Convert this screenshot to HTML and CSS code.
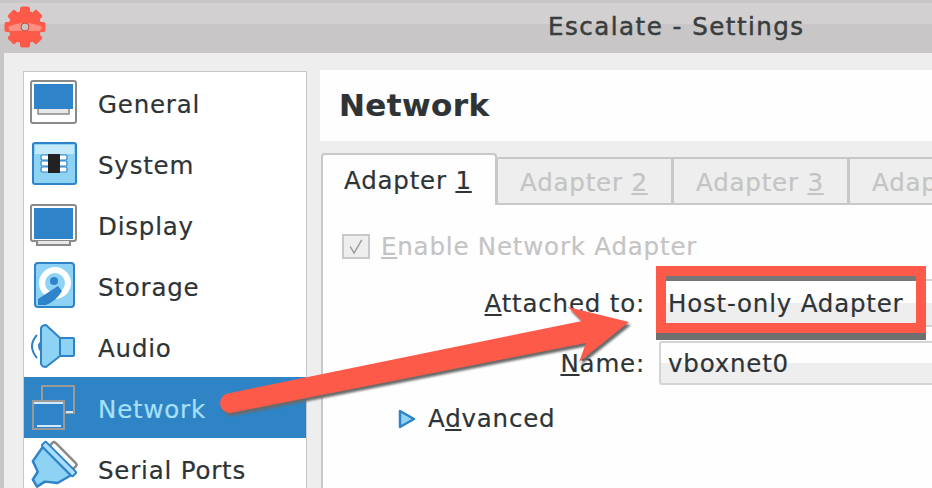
FILE: index.html
```html
<!DOCTYPE html>
<html lang="en">
<head>
    <meta charset="UTF-8">
    <title>Escalate - Settings</title>
    <link rel="stylesheet" href="styles.css">
</head>
<body>
    <div class="titlebar">
        <svg class="gear" viewBox="0 0 50 50" width="50" height="50">
            <g fill="#fe5a4a">
                <circle cx="25" cy="25" r="16.5"/>
                <rect x="20" y="4.5" width="10" height="41" rx="2"/>
                <rect x="20" y="4.5" width="10" height="41" rx="2" transform="rotate(45 25 25)"/>
                <rect x="20" y="4.5" width="10" height="41" rx="2" transform="rotate(90 25 25)"/>
                <rect x="20" y="4.5" width="10" height="41" rx="2" transform="rotate(135 25 25)"/>
            </g>
            <path d="M8 25 Q25 17 42 25 L40 29 H10 Z" fill="#fd8f82"/>
            <circle cx="25" cy="25" r="4" fill="#c8c6c6" stroke="#c9483c"/>
        </svg>
        <span class="title">Escalate - Settings</span>
    </div>

    <div class="window">
        <div class="sidebar">
            <div class="row">
                <svg viewBox="29 72 50 61" width="50" height="61">
                    <rect x="31" y="81" width="45" height="42" rx="2" fill="#fff" stroke="#8a8a8a" stroke-width="2"/>
                    <rect x="34" y="84" width="39" height="25" fill="#2f84c9"/>
                    <path d="M38 109v5h31v-5" fill="#e8e8e8" stroke="#8a8a8a" stroke-width="1.5"/>
                </svg>
                <span>General</span>
            </div>
            <div class="row">
                <svg viewBox="29 72 50 61" width="50" height="61">
                    <rect x="33" y="82" width="43" height="41" rx="2" fill="#8ed3f3" stroke="#2f84c9" stroke-width="2"/>
                    <rect x="35" y="84" width="39" height="9" fill="#c4e9f8"/>
                    <g fill="#fff" stroke="#2f84c9" stroke-width="1.2">
                        <rect x="41" y="94" width="26" height="5" rx="1.5"/>
                        <rect x="41" y="100" width="26" height="5" rx="1.5"/>
                        <rect x="41" y="106" width="26" height="5" rx="1.5"/>
                    </g>
                    <rect x="48" y="93" width="12" height="19" fill="#222"/>
                </svg>
                <span>System</span>
            </div>
            <div class="row">
                <svg viewBox="29 72 50 61" width="50" height="61">
                    <rect x="31" y="83" width="45" height="36" rx="2" fill="#fff" stroke="#8a8a8a" stroke-width="2"/>
                    <rect x="34" y="86" width="39" height="31" fill="#2f84c9"/>
                    <path d="M37 119v4h33v-4" fill="#e8e8e8" stroke="#8a8a8a" stroke-width="2"/>
                </svg>
                <span>Display</span>
            </div>
            <div class="row">
                <svg viewBox="29 72 50 61" width="50" height="61">
                    <rect x="35" y="80" width="39" height="44" rx="3" fill="#8ed3f3" stroke="#2f84c9" stroke-width="2"/>
                    <circle cx="55" cy="100" r="13" fill="#8ed3f3" stroke="#fff" stroke-width="6"/>
                    <circle cx="54" cy="98" r="4" fill="#2f84c9"/>
                    <path d="M38 122 V116 L58 103 L62 108 Q56 118 46 122 Z" fill="#2f84c9"/>
                </svg>
                <span>Storage</span>
            </div>
            <div class="row">
                <svg viewBox="29 72 50 61" width="50" height="61">
                    <path d="M41 84 Q42 81 46 81 L60 94 V112 L46 123 Q42 123 41 120 Z" fill="#8ed3f3" stroke="#2f84c9" stroke-width="2" stroke-linejoin="round"/>
                    <rect x="60" y="94" width="14" height="18" rx="1" fill="#8ed3f3" stroke="#2f84c9" stroke-width="2"/>
                    <path d="M37 91 Q27 102 37 114" fill="none" stroke="#2f84c9" stroke-width="2"/>
                    <path d="M41 98 Q37 102 41 107" fill="none" stroke="#2f84c9" stroke-width="2"/>
                </svg>
                <span>Audio</span>
            </div>
            <div class="row row-selected">
                <svg viewBox="29 72 50 61" width="50" height="61">
                    <rect x="42" y="81" width="32" height="27" fill="#2f84c9" stroke="#9a9a9a" stroke-width="2"/>
                    <rect x="33" y="96" width="31" height="28" fill="#2f84c9" stroke="#9a9a9a" stroke-width="2"/>
                    <rect x="34" y="97" width="29" height="2" fill="#cfeafa"/>
                    <rect x="37" y="120" width="24" height="2" fill="#cfeafa"/>
                    <rect x="66" y="106" width="7" height="2" fill="#cfeafa"/>
                </svg>
                <span>Network</span>
            </div>
            <div class="row">
                <svg viewBox="29 72 50 61" width="50" height="61">
                    <g transform="translate(59 93) rotate(45)">
                        <path d="M-16 -3 V-7 Q-16 -9 -13 -9 H14 Q17 -9 17 -7 V-3" fill="#fff" stroke="#8a8a8a" stroke-width="2.5"/>
                        <path d="M-20 3 L-17 20 L-6 24 L-4 33 L4 35 L6 26 L16 18 L20 3 Z" fill="#8ed3f3" stroke="#2f84c9" stroke-width="2.5" stroke-linejoin="round"/>
                        <rect x="-22" y="-3" width="44" height="6" rx="1.5" fill="#a9def6" stroke="#2f84c9" stroke-width="2"/>
                    </g>
                </svg>
                <span>Serial Ports</span>
            </div>
        </div>

        <div class="main">
            <div class="page-title">Network</div>
            <div class="tabs">
                <div class="tab tab-active">Adapter <u>1</u></div>
                <div class="tab">Adapter <u>2</u></div>
                <div class="tab">Adapter <u>3</u></div>
                <div class="tab">Adapter <u>4</u></div>
            </div>
            <div class="panel">
                <div class="enable">
                    <span class="check">
                        <svg viewBox="0 0 24 22" width="24" height="21">
                            <path d="M6 11 L10 18 L18 4" fill="none" stroke="#9a9a9a" stroke-width="1.5"/>
                        </svg>
                    </span>
                    <span><u>E</u>nable Network Adapter</span>
                </div>
                <div class="form-row">
                    <label class="form-label"><u>A</u>ttached to:</label>
                    <div class="combo combo-tall">Host-only Adapter</div>
                </div>
                <div class="form-row form-row-name">
                    <label class="form-label"><u>N</u>ame:</label>
                    <div class="combo combo-name">vboxnet0</div>
                </div>
                <div class="advanced">
                    <svg viewBox="0 0 18 20" width="18" height="20">
                        <path d="M2 2 L16 10 L2 18 Z" fill="#8ed3f3" stroke="#2f84c9" stroke-width="2.5" stroke-linejoin="round"/>
                    </svg>
                    <span>A<u>d</u>vanced</span>
                </div>
            </div>
        </div>
    </div>

    <div class="red-box"></div>
    <svg class="arrow" viewBox="0 0 932 488" width="932" height="488">
        <path d="M230 393 L582 321 L568 307 L629 322 L579 362 L586 343 L230 413 A10 10 0 0 1 230 393 Z" fill="#fe5a4a"/>
    </svg>
</body>
</html>
```

FILE: styles.css
```css
html, body {
    height: 488px;
    margin: 0;
    overflow: hidden;
}
body {
    position: relative;
    background-color: #c8c6c6;
    font-family: "DejaVu Sans", sans-serif;
    font-size: 24.5px;
    letter-spacing: 0.8px;
    -webkit-text-stroke: 0.2px;
    color: #2e3436;
}
.titlebar {
    display: flex;
    align-items: center;
    height: 53px;
    background: linear-gradient(#c8c6c6 3px, #d2d0d0 3px, #d2d0d0 24px, #c8c6c6 24px);
}
.gear {
    flex: none;
}
.title {
    margin-left: 498px;
    font-size: 24.5px;
    letter-spacing: 1.5px;
    -webkit-text-stroke: 0.5px;
    color: #3a3d3e;
}
.window {
    display: flex;
    align-items: flex-start;
    height: 435px;
    margin-left: 4px;
    padding: 18px 0 0 19px;
    background-color: #eeeeee;
}
.sidebar {
    flex: none;
    width: 282px;
    height: 420px;
    border: 1px solid #c8c8c8;
    background-color: #fff;
}
.row {
    display: flex;
    align-items: center;
    gap: 19px;
    height: 61px;
    padding-left: 5px;
}
.row span {
    padding-top: 3px;
}
.row svg {
    flex: none;
}
.row-selected {
    background-color: #2f84c6;
    color: #a6e0f7;
}
.main {
    flex: none;
    width: 650px;
    margin-left: 13px;
    margin-top: -1px;
}
.page-title {
    height: 71px;
    padding-left: 19px;
    background-color: #fefefe;
    font-size: 31px;
    font-weight: bold;
    line-height: 70px;
    letter-spacing: 0.4px;
}
.tabs {
    display: flex;
    align-items: flex-end;
    height: 52px;
    margin-top: 12px;
    padding-left: 1px;
}
.tab {
    flex: none;
    box-sizing: border-box;
    width: 176px;
    height: 48px;
    padding-left: 22px;
    border: 2px solid #c8c8c8;
    border-left-width: 1px;
    background-color: #eeeeee;
    color: #c4c4c4;
    line-height: 47px;
}
.tab-active {
    height: 52px;
    padding-left: 21px;
    border-width: 2px 2px 0 2px;
    border-radius: 4px 4px 0 0;
    background-color: #fefefe;
    color: #2e3436;
    line-height: 52px;
}
.panel {
    height: 283px;
    margin-left: 1px;
    padding-top: 28px;
    border-left: 2px solid #c8c8c8;
    background-color: #fefefe;
}
.enable {
    display: flex;
    align-items: center;
    gap: 11px;
    height: 26px;
    padding-left: 19px;
    color: #c4c4c4;
}
.check {
    display: flex;
    align-items: center;
    justify-content: center;
    box-sizing: border-box;
    width: 28px;
    height: 25px;
    border: 2px solid #c8c8c8;
    background-color: #eeeeee;
}
.form-row {
    display: flex;
    align-items: center;
    gap: 14px;
    margin-top: 20px;
}
.form-row-name {
    margin-top: 14px;
}
.form-label {
    flex: none;
    width: 322px;
    text-align: right;
}
.combo {
    flex: 1;
    box-sizing: border-box;
    padding-left: 7px;
    border: 2px solid #d4d4d4;
    border-radius: 3px;
    background: linear-gradient(#fefefe 50%, #eeeeee 50%);
    display: flex;
    align-items: center;
}
.combo-tall {
    height: 48px;
}
.combo-name {
    height: 44px;
}
.advanced {
    display: flex;
    align-items: center;
    gap: 12px;
    margin-top: 19px;
    padding-left: 75px;
}
.red-box {
    position: absolute;
    left: 656px;
    top: 266px;
    box-sizing: border-box;
    width: 270px;
    height: 67px;
    border: 10px solid #fe5a4a;
    box-shadow: 0 7px 0 #6f6f6f, inset 0 5px 0 #777777;
}
.arrow {
    position: absolute;
    left: 0;
    top: 0;
    filter: drop-shadow(2px 3px 1px #6a6a6a);
}
```
